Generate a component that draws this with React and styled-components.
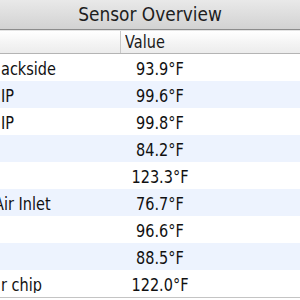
import React from "react";
import styled, { createGlobalStyle } from "styled-components";

const rows = [
	{ name: "ackside", shift: 1, value: "93.9°F" },
	{ name: "IP", shift: 1, value: "99.6°F" },
	{ name: "IP", shift: 1, value: "99.8°F" },
	{ name: "", shift: 0, value: "84.2°F" },
	{ name: "", shift: 0, value: "123.3°F" },
	{ name: "Air Inlet", shift: -6, value: "76.7°F" },
	{ name: "", shift: 0, value: "96.6°F" },
	{ name: "", shift: 0, value: "88.5°F" },
	{ name: "r chip", shift: 1, value: "122.0°F" },
];

export default function App() {
	return (
		<>
			<GlobalStyle />
			<Window>
				<TitleBar>
					<Stretch>Sensor Overview</Stretch>
				</TitleBar>
				<HeaderRow>
					<NameHead />
					<ValueHead>
						<Stretch>Value</Stretch>
					</ValueHead>
				</HeaderRow>
				<Body>
					{rows.map((r, i) => (
						<Row key={i} striped={i % 2 === 1}>
							<NameCell>
								<NameText shift={r.shift}>{r.name}</NameText>
							</NameCell>
							<ValueCell>
								<Stretch>{r.value}</Stretch>
							</ValueCell>
						</Row>
					))}
				</Body>
			</Window>
		</>
	);
}

const GlobalStyle = createGlobalStyle`
	html, body {
		margin: 0;
		padding: 0;
		background: #ffffff;
	}
`;

const Window = styled.div`
	width: 300px;
	height: 300px;
	overflow: hidden;
	background: #ffffff;
	font-family: "DejaVu Sans", sans-serif;
	color: #111111;
	display: flex;
	flex-direction: column;
`;

const Stretch = styled.span`
	display: inline-block;
	transform: scaleY(1.18);
	white-space: nowrap;
`;

const TitleBar = styled.div`
	height: 30px;
	flex: none;
	display: flex;
	align-items: center;
	justify-content: center;
	font-size: 17px;
	color: #1e1e1e;
	background: linear-gradient(#e9e9e9, #d2d2d2);
	border-bottom: 1px solid #8c8c8c;
	padding-bottom: 1px;
	box-sizing: border-box;
`;

const HeaderRow = styled.div`
	height: 24px;
	flex: none;
	display: flex;
	box-sizing: border-box;
	background: linear-gradient(#ffffff, #f3f3f3 60%, #ececec);
	border-top: 1px solid #e4e4e4;
	border-bottom: 1px solid #b4b4b4;
	font-size: 14.5px;
`;

const NameHead = styled.div`
	width: 121px;
	box-sizing: border-box;
	border-right: 1px solid #c8c8c8;
`;

const ValueHead = styled.div`
	display: flex;
	align-items: center;
	padding-left: 4px;
	color: #1a1a1a;
`;

const Body = styled.div`
	display: flex;
	flex-direction: column;
	border-bottom: 1px solid #c4c4c4;
`;

const Row = styled.div`
	height: 27px;
	display: flex;
	align-items: center;
	padding-top: 3px;
	box-sizing: border-box;
	font-size: 14.5px;
	background: ${(p) => (p.striped ? "#edf3fe" : "#ffffff")};
`;

const NameCell = styled.div`
	width: 120px;
	overflow: hidden;
	display: flex;
`;

const NameText = styled(Stretch)`
	margin-left: ${(p) => p.shift}px;
`;

const ValueCell = styled.div`
	width: 80px;
	text-align: center;
`;
